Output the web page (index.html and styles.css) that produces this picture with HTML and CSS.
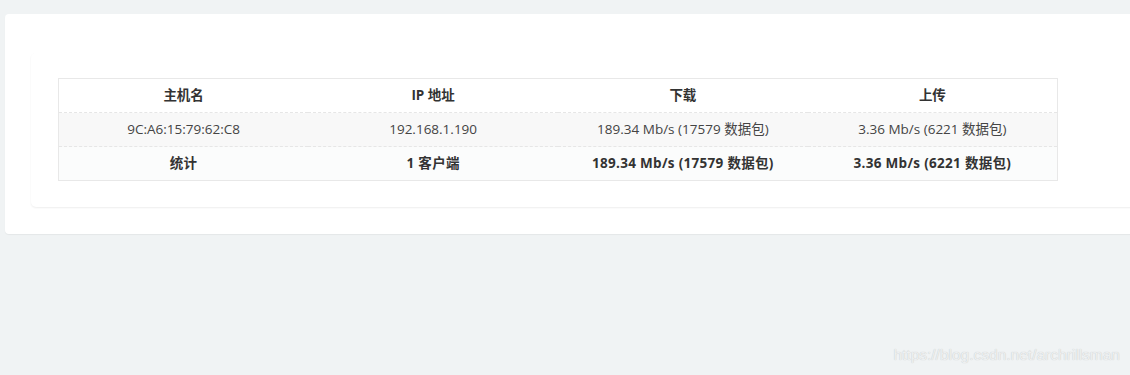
FILE: index.html
```html
<!DOCTYPE html>
<html lang="zh">
<head>
<meta charset="utf-8">
<title>客户端统计</title>
<link rel="stylesheet" href="styles.css">
</head>
<body>
<div class="panel">
  <div class="inner">
    <table class="stats">
      <thead>
        <tr><th>主机名</th><th>IP 地址</th><th>下载</th><th>上传</th></tr>
      </thead>
      <tbody>
        <tr class="row"><td>9C:A6:15:79:62:C8</td><td>192.168.1.190</td><td>189.34 Mb/s (17579 数据包)</td><td>3.36 Mb/s (6221 数据包)</td></tr>
        <tr class="total"><td>统计</td><td>1 客户端</td><td>189.34 Mb/s (17579 数据包)</td><td>3.36 Mb/s (6221 数据包)</td></tr>
      </tbody>
    </table>
  </div>
</div>
<div class="watermark">https://blog.csdn.net/archrillsman</div>
</body>
</html>
```
FILE: styles.css
```css
html, body {
  margin: 0;
  padding: 0;
}
body {
  background: #f0f3f4;
  width: 1130px;
  height: 375px;
  overflow: hidden;
  position: relative;
  font-family: "Open Sans", "Noto Sans CJK SC", sans-serif;
  font-size: 13.5px;
  color: #444;
}
.panel {
  margin: 14px 0 0 5px;
  width: 1140px;
  background: #fff;
  border-radius: 4px;
  box-shadow: 0 1px 1px rgba(0,0,0,0.05);
  padding: 39px 0 27px 26px;
  box-sizing: border-box;
}
.inner {
  background: #fff;
  border-radius: 5px;
  box-shadow: 0 1px 2px rgba(0,0,0,0.07);
  padding: 25px 0 26px 27px;
}
.stats {
  width: 1000px;
  border-collapse: collapse;
  border: 1px solid #e8e8e8;
}
.stats th, .stats td {
  width: 25%;
  text-align: center;
  padding: 8px;
  line-height: 17px;
}
.stats th {
  font-weight: bold;
  color: #333;
}
.stats tbody td {
  border-top: 1px dashed #e6e6e6;
}
.row td {
  background: #f8f8f8;
}
.total td {
  background: #fbfcfc;
  font-weight: bold;
  color: #333;
  letter-spacing: 0.3px;
}
.watermark {
  position: absolute;
  right: 10px;
  top: 346px;
  font-family: "Liberation Sans", Arial, sans-serif;
  font-size: 15.5px;
  color: #eef0f1;
  text-shadow: 0 0 1px rgba(0,0,0,0.22);
}
```
